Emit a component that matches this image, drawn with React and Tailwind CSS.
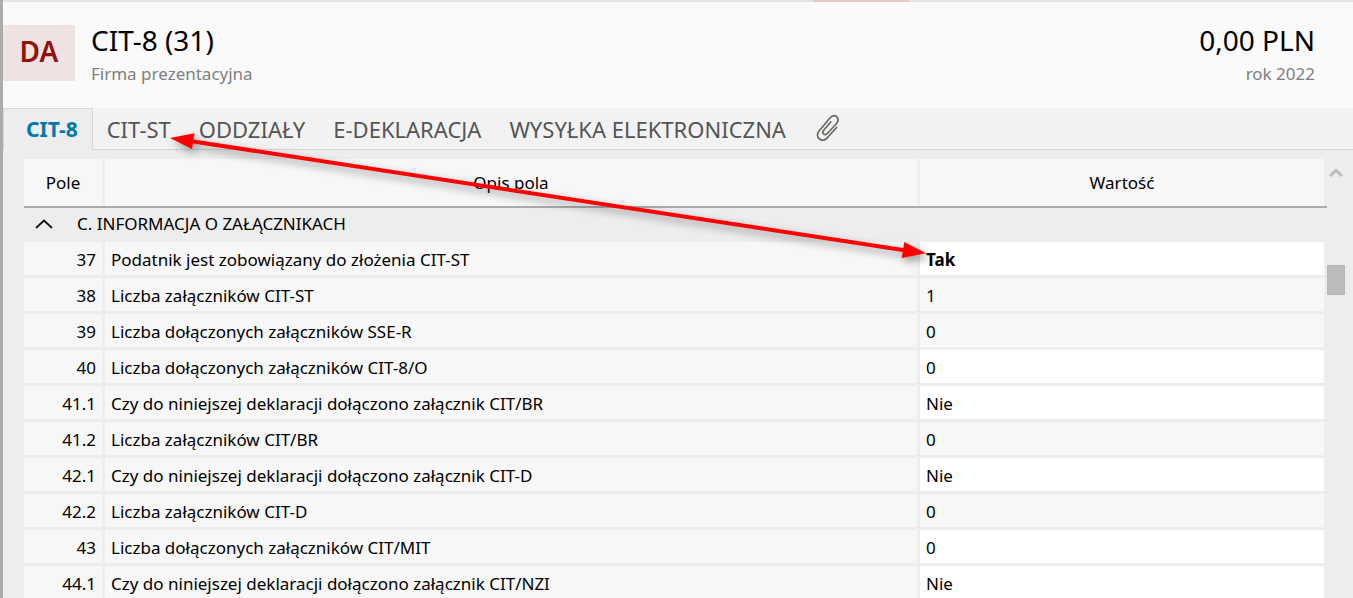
import { useState } from 'react';

const TABS = ['CIT-8', 'CIT-ST', 'ODDZIAŁY', 'E-DEKLARACJA', 'WYSYŁKA ELEKTRONICZNA'];

const ROWS = [
  { field: '37', label: 'Podatnik jest zobowiązany do złożenia CIT-ST', value: 'Tak', editable: true, changed: true },
  { field: '38', label: 'Liczba załączników CIT-ST', value: '1' },
  { field: '39', label: 'Liczba dołączonych załączników SSE-R', value: '0' },
  { field: '40', label: 'Liczba dołączonych załączników CIT-8/O', value: '0', editable: true },
  { field: '41.1', label: 'Czy do niniejszej deklaracji dołączono załącznik CIT/BR', value: 'Nie', editable: true },
  { field: '41.2', label: 'Liczba załączników CIT/BR', value: '0' },
  { field: '42.1', label: 'Czy do niniejszej deklaracji dołączono załącznik CIT-D', value: 'Nie', editable: true },
  { field: '42.2', label: 'Liczba załączników CIT-D', value: '0' },
  { field: '43', label: 'Liczba dołączonych załączników CIT/MIT', value: '0', editable: true },
  { field: '44.1', label: 'Czy do niniejszej deklaracji dołączono załącznik CIT/NZI', value: 'Nie', editable: true },
];

export default function App() {
  const [tab, setTab] = useState('CIT-8');
  const [open, setOpen] = useState(true);

  return (
    <div className="relative flex h-screen overflow-hidden bg-[#ededed] font-['Segoe_UI','Noto_Sans',sans-serif] text-black">
      <div className="w-[3px] shrink-0 bg-[#ababab]" />
      <div className="flex min-w-0 flex-1 flex-col">
        <div className="flex h-[2px] shrink-0 bg-[#e5e5e5]">
          <div className="ml-[60%] w-24 bg-[#e8c9c7]" />
        </div>
        <Header />
        <Tabs active={tab} onSelect={setTab} />
        <div className="flex min-h-0 flex-1 pt-[9px] pr-2 pl-5">
          <div className="min-w-0 flex-1 overflow-hidden">
            <FieldTable open={open} onToggle={() => setOpen(!open)} />
          </div>
          <Scrollbar />
        </div>
      </div>
      <Arrow />
    </div>
  );
}

function Header() {
  return (
    <header className="flex h-[106px] shrink-0 items-start bg-[#fafafa] pt-5 pr-[38px]">
      <div className="mt-[3px] flex h-14 w-[72px] items-center justify-center bg-[#eee3e2] pb-1 text-[28px] font-semibold text-[#8e130b]">
        DA
      </div>
      <div className="ml-4 flex-1">
        <h1 className="text-[28px] leading-9">CIT-8 (31)</h1>
        <p className="text-[17px] leading-8 text-[#808080]">Firma prezentacyjna</p>
      </div>
      <div className="text-right">
        <div className="text-[28px] leading-9">0,00 PLN</div>
        <div className="text-[17px] leading-8 text-[#808080]">rok 2022</div>
      </div>
    </header>
  );
}

function Tabs({ active, onSelect }) {
  return (
    <nav className="flex h-[42px] shrink-0 border-b border-[#d6d6d6] bg-[#f2f2f2] text-[22px] text-[#555]">
      {TABS.map((t) => (
        <button
          key={t}
          type="button"
          onClick={() => onSelect(t)}
          className={
            t === active
              ? '-mb-px border-t border-r border-l border-[#d6d6d6] bg-[#ededed] pr-[14px] pl-[22px] text-[21px] font-bold text-[#0078ae]'
              : 'px-[14px] pt-[2px]'
          }
        >
          {t}
        </button>
      ))}
      <button type="button" aria-label="Załączniki" className="px-4 pb-[2px]">
        <svg width="24" height="28" viewBox="0 0 24 28" fill="none" stroke="#6b6864" strokeWidth="1.7" strokeLinecap="round">
          <path d="M20.5 13.5 L12 23 C9.5 26.5 5.8 27 3.4 25 C0.8 22.8 1 19.5 3.3 16.8 L13.5 4.5 C15.8 1.7 18.4 1 20.5 2.7 C22.8 4.6 22.5 7 20.5 9.5 L11.5 19.3 C10.3 20.6 8.6 20.8 7.6 19.9 C6.5 18.8 6.7 17.5 7.7 16.2 L14.8 8" />
        </svg>
      </button>
    </nav>
  );
}

function FieldTable({ open, onToggle }) {
  const th = 'border-b-2 border-[#ababab] bg-[#f7f7f7] p-0 text-center font-normal';
  return (
    <table className="w-full table-fixed border-separate border-spacing-0 border-l border-[#ededed] text-[17px] leading-6">
      <colgroup>
        <col className="w-[81px]" />
        <col />
        <col className="w-[407px]" />
      </colgroup>
      <thead>
        <tr className="h-[49px]">
          {['Pole', 'Opis pola', 'Wartość'].map((h) => (
            <th key={h} scope="col" className={th}>
              <div className="h-[47px] border-r-3 border-[#ededed] leading-[47px]">{h}</div>
            </th>
          ))}
        </tr>
      </thead>
      <tbody>
        <tr className="h-[34px]">
          <td colSpan={3} className="p-0 pb-[2px]">
            <button type="button" onClick={onToggle} aria-expanded={open} className="flex items-center pl-[11px]">
              <svg width="18" height="10" viewBox="0 0 18 10" fill="none" stroke="#111" strokeWidth="1.8">
                <path d={open ? 'M1 9 L9 1.5 L17 9' : 'M1 1 L9 8.5 L17 1'} />
              </svg>
              <span className="ml-6">C. INFORMACJA O ZAŁĄCZNIKACH</span>
            </button>
          </td>
        </tr>
        {open && ROWS.map((r) => <FieldRow key={r.field} row={r} />)}
      </tbody>
    </table>
  );
}

function FieldRow({ row }) {
  const td = 'border-r-3 border-b-3 border-[#ededed] pt-[2px] pb-0';
  return (
    <tr className="h-9">
      <td className={`${td} bg-[#f7f7f7] pr-[6px] pl-0 text-right`}>{row.field}</td>
      <td className={`${td} bg-[#f7f7f7] px-[6px]`}>{row.label}</td>
      <td className={`${td} px-[6px] ${row.editable ? 'bg-white' : 'bg-[#f7f7f7]'} ${row.changed ? 'font-bold' : ''}`}>
        {row.value}
      </td>
    </tr>
  );
}

function Scrollbar() {
  return (
    <div className="flex w-[18px] shrink-0 flex-col items-center pt-[9px]">
      <svg width="14" height="10" viewBox="0 0 14 10" fill="none" stroke="#bdbdbd" strokeWidth="3">
        <path d="M1 8 L7 2.5 L13 8" />
      </svg>
      <div className="mt-[87px] h-[30px] w-full border border-[#b5b5b5] bg-[#bcbcbc]" />
    </div>
  );
}

// double-headed pointer between the CIT-ST tab and field 37
function Arrow() {
  return (
    <svg
      className="pointer-events-none absolute top-0 left-0 drop-shadow-[3px_4px_4px_rgba(0,0,0,0.4)]"
      width="960"
      height="280"
      viewBox="0 0 960 280"
    >
      <path d="M190 141 L906 250.500" stroke="#f00" strokeWidth="4" />
      <path d="M170 138 L194.500 133.300 L192 149 Z" fill="#f00" />
      <path d="M926 253.300 L904.300 242 L901.700 258 Z" fill="#f00" />
    </svg>
  );
}
